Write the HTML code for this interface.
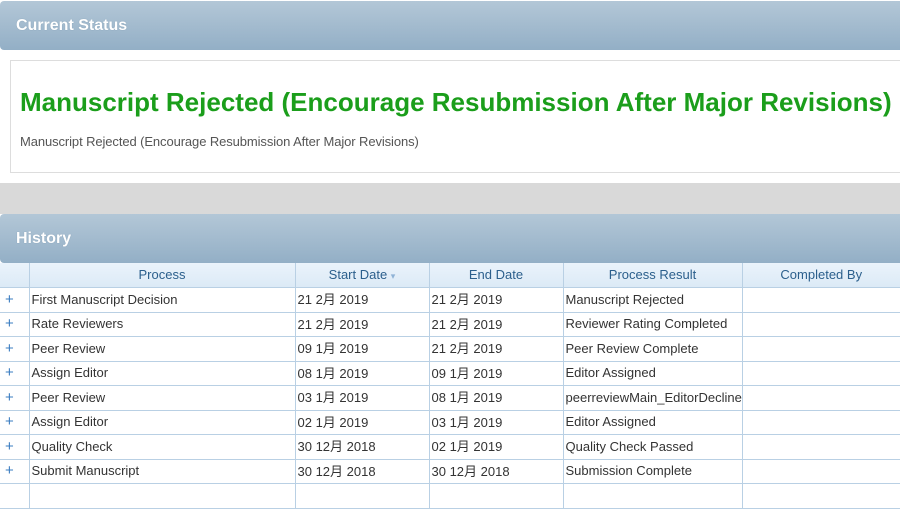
<!DOCTYPE html>
<html><head><meta charset="utf-8"><style>
body{margin:0;width:900px;height:489px;overflow:hidden;background:#fff;font-family:"Liberation Sans","Noto Sans CJK SC",sans-serif;position:relative}
.bar{position:absolute;left:0;width:900px;height:49px;background:linear-gradient(#b3c7d7,#93afc6);border-radius:4px 0 0 4px;color:#fff;font-weight:bold;font-size:16px;box-sizing:border-box;padding-left:16px;line-height:50px;text-shadow:0 0 1px #7a96ad}
.box{position:absolute;left:10px;top:60px;width:900px;height:113px;border:1px solid #ddd;box-sizing:border-box}
.gray{position:absolute;left:0;top:183px;width:900px;height:31px;background:#d9d9d9}
h1{position:absolute;left:20px;top:87px;margin:0;font-size:26px;color:#1b9e1b;white-space:nowrap;letter-spacing:0px}
.sub{position:absolute;left:20px;top:134px;font-size:13px;color:#555;white-space:nowrap;letter-spacing:-0.1px}
table{position:absolute;left:0;top:263px;border-collapse:collapse;table-layout:fixed;width:900px;font-size:13px}
th{height:24px;background:linear-gradient(#eaf3fb,#dceaf6);color:#2b5f8c;font-weight:normal;border-left:1px solid #b9d0e4;border-bottom:1px solid #b9d0e4;padding:0;line-height:14px}
td{height:23.5px;line-height:14px;border-left:1px solid #b9d0e4;border-bottom:1px solid #b9d0e4;color:#333;padding:0 0 0 2px;white-space:nowrap;overflow:hidden}
td span.c{display:inline-block;height:14px;line-height:14px;vertical-align:middle}
td.p{color:#3a7cc0;font-size:15px;padding-left:5px}
th:first-child,td:first-child{border-left:none}
</style></head><body>
<div class="bar" style="top:1px">Current Status</div>
<div class="box"></div>
<h1>Manuscript Rejected (Encourage Resubmission After Major Revisions)</h1>
<div class="sub">Manuscript Rejected (Encourage Resubmission After Major Revisions)</div>
<div class="gray"></div>
<div class="bar" style="top:214px">History</div>
<table>
<colgroup><col style="width:29px"><col style="width:266px"><col style="width:134px"><col style="width:134px"><col style="width:179px"><col></colgroup>
<tr><th></th><th>Process</th><th>Start Date <span style="color:#8fb3d6;font-size:9px">▾</span></th><th>End Date</th><th>Process Result</th><th>Completed By</th></tr>
<tr><td class="p">+</td><td>First Manuscript Decision</td><td><span class="c">21 2月 2019</span></td><td><span class="c">21 2月 2019</span></td><td>Manuscript Rejected</td><td></td></tr>
<tr><td class="p">+</td><td>Rate Reviewers</td><td><span class="c">21 2月 2019</span></td><td><span class="c">21 2月 2019</span></td><td>Reviewer Rating Completed</td><td></td></tr>
<tr><td class="p">+</td><td>Peer Review</td><td><span class="c">09 1月 2019</span></td><td><span class="c">21 2月 2019</span></td><td>Peer Review Complete</td><td></td></tr>
<tr><td class="p">+</td><td>Assign Editor</td><td><span class="c">08 1月 2019</span></td><td><span class="c">09 1月 2019</span></td><td>Editor Assigned</td><td></td></tr>
<tr><td class="p">+</td><td>Peer Review</td><td><span class="c">03 1月 2019</span></td><td><span class="c">08 1月 2019</span></td><td>peerreviewMain_EditorDeclined</td><td></td></tr>
<tr><td class="p">+</td><td>Assign Editor</td><td><span class="c">02 1月 2019</span></td><td><span class="c">03 1月 2019</span></td><td>Editor Assigned</td><td></td></tr>
<tr><td class="p">+</td><td>Quality Check</td><td><span class="c">30 12月 2018</span></td><td><span class="c">02 1月 2019</span></td><td>Quality Check Passed</td><td></td></tr>
<tr><td class="p">+</td><td>Submit Manuscript</td><td><span class="c">30 12月 2018</span></td><td><span class="c">30 12月 2018</span></td><td>Submission Complete</td><td></td></tr>
<tr><td></td><td></td><td></td><td></td><td></td><td></td></tr>
</table>
</body></html>
